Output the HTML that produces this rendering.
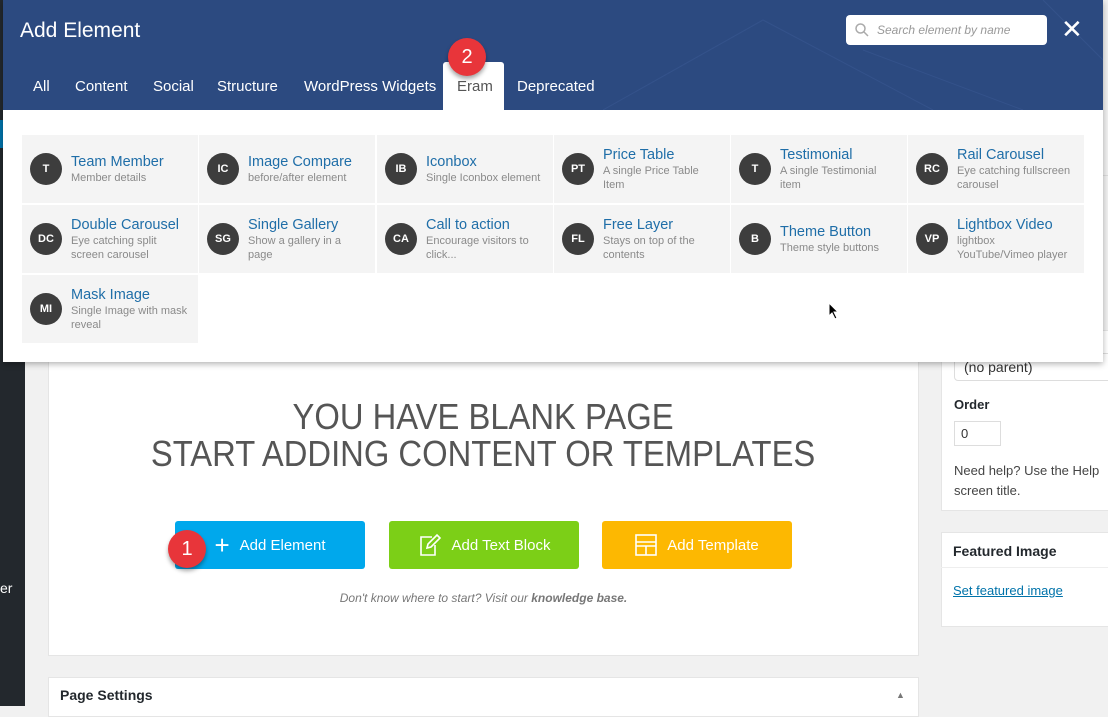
<!DOCTYPE html>
<html><head><meta charset="utf-8"><style>
*{box-sizing:border-box;margin:0;padding:0}
body{width:1108px;height:706px;overflow:hidden;background:#f1f1f1;font-family:"Liberation Sans",sans-serif;position:relative}
.abs{position:absolute}
.side{left:0;top:0;width:25px;height:706px;background:#23282d}
.box{background:#fff;border:1px solid #e5e5e5}
.modal{left:3px;top:0;width:1100px;height:362px;background:#fff;box-shadow:0 2px 6px rgba(0,0,0,.3)}
.hdr{left:0;top:0;width:1100px;height:110px;background:#2c4a80;overflow:hidden}
.tab{position:absolute;top:78px;color:#fff;font-size:15px}
.cell{position:absolute;width:176px;height:68px;background:#f4f4f4;display:flex;align-items:center}
.cir{width:32px;height:32px;border-radius:50%;background:#3d3d3d;color:#fff;font-size:11px;font-weight:bold;display:flex;align-items:center;justify-content:center;margin:0 9px 0 8px;flex:none}
.t{color:#1f6ea8;font-size:14.5px;line-height:17px}
.d{color:#8a8a8a;font-size:11px;line-height:14px}
.btn{position:absolute;top:521px;height:48px;border-radius:3px;color:#fff;font-size:15px;display:flex;align-items:center;justify-content:center;gap:10px}
.badge{position:absolute;width:38px;height:38px;border-radius:50%;background:#e8353a;color:#fff;font-size:20px;display:flex;align-items:center;justify-content:center;box-shadow:0 3px 4px rgba(0,0,0,.35)}
</style></head><body>
<div class="abs side"></div>
<div class="abs" style="left:0;top:120px;width:3px;height:28px;background:#0073aa"></div>
<div class="abs" style="left:0;top:580px;color:#fff;font-size:14px">er</div>

<div class="abs box" style="left:48px;top:340px;width:871px;height:316px"></div>
<div class="abs" style="left:48px;top:398px;width:871px;text-align:center;color:#555;font-size:36px;line-height:37px">
<span style="display:inline-block;transform:scaleX(0.91)">YOU HAVE BLANK PAGE<br>START ADDING CONTENT OR TEMPLATES</span></div>
<div class="btn" style="left:175px;width:190px;background:#00a8ec"><span style="font-size:26px;font-weight:300">+</span>Add Element</div>
<div class="btn" style="left:389px;width:190px;background:#7ccf17"><svg width="24" height="24" viewBox="0 0 24 24" fill="none" stroke="#fff" stroke-width="1.6"><path d="M14 4H3v18h14V12"/><path d="M9 15l1-4 9-9 3 3-9 9z"/></svg>Add Text Block</div>
<div class="btn" style="left:602px;width:190px;background:#fdb801"><svg width="22" height="22" viewBox="0 0 22 22" fill="none" stroke="#fff" stroke-width="1.6"><rect x="1" y="1" width="20" height="20"/><path d="M1 8h20M11 12v9M1 12h20"/></svg>Add Template</div>
<div class="badge" style="left:168px;top:530px">1</div>
<div class="abs" style="left:48px;top:591px;width:871px;text-align:center;color:#777;font-size:12px;font-style:italic">Don't know where to start? Visit our <b>knowledge base.</b></div>
<div class="abs box" style="left:48px;top:677px;width:871px;height:40px"></div>
<div class="abs" style="left:60px;top:687px;font-size:14px;font-weight:bold;color:#23282d">Page Settings</div>
<div class="abs" style="left:896px;top:690px;font-size:9px;color:#777">▲</div>

<div class="abs box" style="left:941px;top:330px;width:180px;height:181px"></div>
<div class="abs" style="left:954px;top:353px;width:160px;height:28px;border:1px solid #ddd;border-radius:4px;font-size:14px;color:#333;padding:5px 9px">(no parent)</div>
<div class="abs" style="left:954px;top:397px;font-size:13px;font-weight:bold;color:#23282d">Order</div>
<div class="abs" style="left:954px;top:421px;width:47px;height:25px;border:1px solid #ddd;font-size:13px;padding:4px 6px;color:#333">0</div>
<div class="abs" style="left:954px;top:461px;font-size:13px;line-height:20px;color:#444;white-space:nowrap">Need help? Use the Help<br>screen title.</div>
<div class="abs box" style="left:941px;top:532px;width:180px;height:95px"></div>
<div class="abs" style="left:941px;top:567px;width:180px;height:1px;background:#eee"></div>
<div class="abs" style="left:953px;top:543px;font-size:14px;font-weight:bold;color:#23282d">Featured Image</div>
<div class="abs" style="left:953px;top:583px;font-size:13px;color:#0073aa;text-decoration:underline">Set featured image</div>
<div class="abs" style="left:1103px;top:175px;width:5px;height:1px;background:#ddd"></div>

<div class="abs modal">
 <div class="abs hdr">
  <svg class="abs" style="left:600px;top:0" width="500" height="110"><g stroke="#34528a" stroke-width="1" fill="none"><path d="M0 110L160 20L330 110M260 50L420 110M440 0L500 60"/></g></svg>
  <div class="abs" style="left:17px;top:19px;color:#fff;font-size:21px">Add Element</div>
  <div class="abs" style="left:843px;top:15px;width:201px;height:30px;background:#fff;border-radius:4px;display:flex;align-items:center">
   <svg style="margin:0 8px 0 9px" width="14" height="14" viewBox="0 0 14 14" fill="none" stroke="#aaa" stroke-width="1.5"><circle cx="5.5" cy="5.5" r="4.5"/><path d="M9 9l4 4"/></svg>
   <span style="color:#999;font-size:12px;font-style:italic">Search element by name</span></div>
  <div class="abs" style="left:1058px;top:14px;color:#fff;font-size:26px;line-height:30px">✕</div>
  <div class="tab" style="left:30px">All</div>
  <div class="tab" style="left:72px">Content</div>
  <div class="tab" style="left:150px">Social</div>
  <div class="tab" style="left:214px">Structure</div>
  <div class="tab" style="left:301px">WordPress Widgets</div>
  <div class="abs" style="left:440px;top:62px;width:61px;height:48px;background:#fff;border-radius:3px 3px 0 0"></div>
  <div class="tab" style="left:454px;color:#555">Eram</div>
  <div class="tab" style="left:514px">Deprecated</div>
  <div class="badge" style="left:445px;top:38px">2</div>
 </div>
</div>

<div class="cell" style="left:22px;top:135px"><div class="cir">T</div><div><div class="t">Team Member</div><div class="d">Member details</div></div></div>
<div class="cell" style="left:199px;top:135px"><div class="cir">IC</div><div><div class="t">Image Compare</div><div class="d">before/after element</div></div></div>
<div class="cell" style="left:377px;top:135px"><div class="cir">IB</div><div><div class="t">Iconbox</div><div class="d">Single Iconbox element</div></div></div>
<div class="cell" style="left:554px;top:135px"><div class="cir">PT</div><div><div class="t">Price Table</div><div class="d">A single Price Table<br>Item</div></div></div>
<div class="cell" style="left:731px;top:135px"><div class="cir">T</div><div><div class="t">Testimonial</div><div class="d">A single Testimonial<br>item</div></div></div>
<div class="cell" style="left:908px;top:135px"><div class="cir">RC</div><div><div class="t">Rail Carousel</div><div class="d">Eye catching fullscreen<br>carousel</div></div></div>
<div class="cell" style="left:22px;top:205px"><div class="cir">DC</div><div><div class="t">Double Carousel</div><div class="d">Eye catching split<br>screen carousel</div></div></div>
<div class="cell" style="left:199px;top:205px"><div class="cir">SG</div><div><div class="t">Single Gallery</div><div class="d">Show a gallery in a<br>page</div></div></div>
<div class="cell" style="left:377px;top:205px"><div class="cir">CA</div><div><div class="t">Call to action</div><div class="d">Encourage visitors to<br>click...</div></div></div>
<div class="cell" style="left:554px;top:205px"><div class="cir">FL</div><div><div class="t">Free Layer</div><div class="d">Stays on top of the<br>contents</div></div></div>
<div class="cell" style="left:731px;top:205px"><div class="cir">B</div><div><div class="t">Theme Button</div><div class="d">Theme style buttons</div></div></div>
<div class="cell" style="left:908px;top:205px"><div class="cir">VP</div><div><div class="t">Lightbox Video</div><div class="d">lightbox<br>YouTube/Vimeo player</div></div></div>
<div class="cell" style="left:22px;top:275px"><div class="cir">MI</div><div><div class="t">Mask Image</div><div class="d">Single Image with mask<br>reveal</div></div></div>
<svg class="abs" style="left:828px;top:302px" width="12" height="18" viewBox="0 0 12 18"><path d="M1 1v13l3-3 3 6 2-1-3-6h4z" fill="#000" stroke="#fff" stroke-width="1"/></svg>
</body></html>
